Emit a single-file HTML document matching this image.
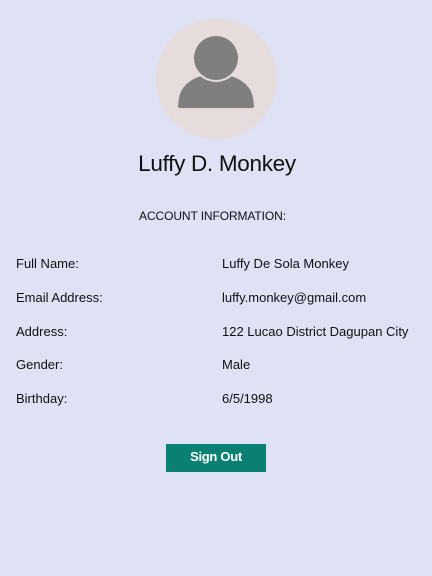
<!DOCTYPE html>
<html><head><style>
body{margin:0;width:432px;height:576px;background:#dfe1f4;font-family:"Liberation Sans",sans-serif;color:#111;position:relative;overflow:hidden}
.t{position:absolute;white-space:nowrap;line-height:1}
.l{left:16px;font-size:13px;letter-spacing:0}
.v{left:222px;font-size:13px;letter-spacing:0}
</style></head><body>
<svg style="position:absolute;left:0;top:0" width="432" height="200">
<circle cx="216.5" cy="79" r="60.5" fill="#e6dcdc"/>
<path d="M178 106 L179 98 C181 84 196 74 216 74 C236 74 251 84 253 98 L254 106 Q254 108 252 108 L180 108 Q178 108 178 106 Z" fill="#7f7f7f"/>
<circle cx="216" cy="58" r="24" fill="#e6dcdc"/>
<circle cx="216" cy="58" r="22" fill="#7f7f7f"/>
</svg>
<div class="t" style="left:0;width:434px;text-align:center;top:153px;font-size:22.5px;letter-spacing:-0.3px">Luffy D. Monkey</div>
<div class="t" style="left:0;width:425px;text-align:center;top:210px;font-size:12px;letter-spacing:-0.1px">ACCOUNT INFORMATION:</div>
<div class="t l" style="top:257px">Full Name:</div><div class="t v" style="top:257px">Luffy De Sola Monkey</div>
<div class="t l" style="top:291px">Email Address:</div><div class="t v" style="top:291px">luffy.monkey@gmail.com</div>
<div class="t l" style="top:325px">Address:</div><div class="t v" style="top:325px">122 Lucao District Dagupan City</div>
<div class="t l" style="top:358px">Gender:</div><div class="t v" style="top:358px">Male</div>
<div class="t l" style="top:392px">Birthday:</div><div class="t v" style="top:392px">6/5/1998</div>
<div style="position:absolute;left:166px;top:444px;width:100px;height:28px;background:#0a8073;color:#fff;font-size:13px;font-weight:bold;text-align:center;line-height:26px;letter-spacing:-0.3px">Sign Out</div>
</body></html>
